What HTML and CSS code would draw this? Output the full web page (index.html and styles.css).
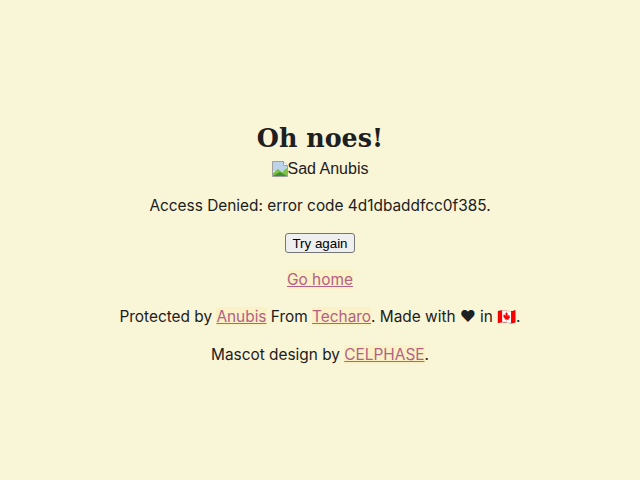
FILE: index.html
```html
<!DOCTYPE html>
<html lang="en">
<head>
<meta charset="utf-8">
<title>Oh noes!</title>
<link rel="stylesheet" href="styles.css">
</head>
<body>
<main class="page">
  <h1 class="title">Oh noes!</h1>
  <div class="content">
    <span class="broken-img"><svg class="broken-icon" width="16" height="16" viewBox="0 0 16 16" aria-hidden="true"><path d="M0.5 0.5h11l4 4v11h-15z" fill="#eef3f8" stroke="#a0a0a0"/><path d="M1 1h10v4h4v5L1 10z" fill="#bcd3ea"/><path d="M1 12l5-4 4 3 5-4v8H1z" fill="#7cc24a"/><path d="M1 15l7-4 7 4z" fill="#3f8f2f"/><path d="M11.5 0.5v4h4" fill="#fff" stroke="#a0a0a0"/></svg>Sad Anubis</span>
    <p class="status">Access Denied: error code 4d1dbaddfcc0f385.</p>
    <button class="retry" type="button">Try again</button>
    <p class="line"><a href="#">Go home</a></p>
    <footer class="footer">
      <p class="line">Protected by <a href="#">Anubis</a> From <a href="#">Techaro</a>. Made with ❤ in <span class="flag">🇨🇦</span>.</p>
      <p class="line">Mascot design by <a href="#">CELPHASE</a>.</p>
    </footer>
  </div>
</main>
</body>
</html>
```
FILE: styles.css
```css
html, body {
  margin: 0;
  padding: 0;
  background: #f9f5d7;
}
body {
  color: #1d2021;
  font-family: Inter, "Noto Sans", sans-serif;
  font-size: 15.4px;
  line-height: 21px;
}
.page {
  display: flex;
  flex-direction: column;
  align-items: center;
  padding-top: 122px;
}
.title {
  margin: 0;
  font-family: "DejaVu Serif", serif;
  font-weight: bold;
  font-size: 25.4px;
  line-height: 32px;
  color: #1d2021;
}
.content {
  display: flex;
  flex-direction: column;
  align-items: center;
}
.broken-img {
  display: inline-flex;
  align-items: center;
  font-family: "Liberation Sans", Arial, sans-serif;
  font-size: 16px;
  line-height: 19px;
  margin-top: 5px;
}
.status {
  margin: 17px 0 0;
}
.retry {
  margin-top: 17px;
  font-family: "Liberation Sans", Arial, sans-serif;
  font-size: 13.33px;
  padding: 1px 6px;
  color: #000;
  background: #efefef;
  border: 1px solid #767676;
  border-radius: 3px;
  height: 20px;
}
.line {
  margin: 16px 0 0;
}
.footer {
  display: flex;
  flex-direction: column;
  align-items: center;
}
.flag {
  font-family: "DejaVu Sans", sans-serif;
}
a {
  color: #b16286;
  background: #fbf1c7;
  text-decoration: underline;
}
```
